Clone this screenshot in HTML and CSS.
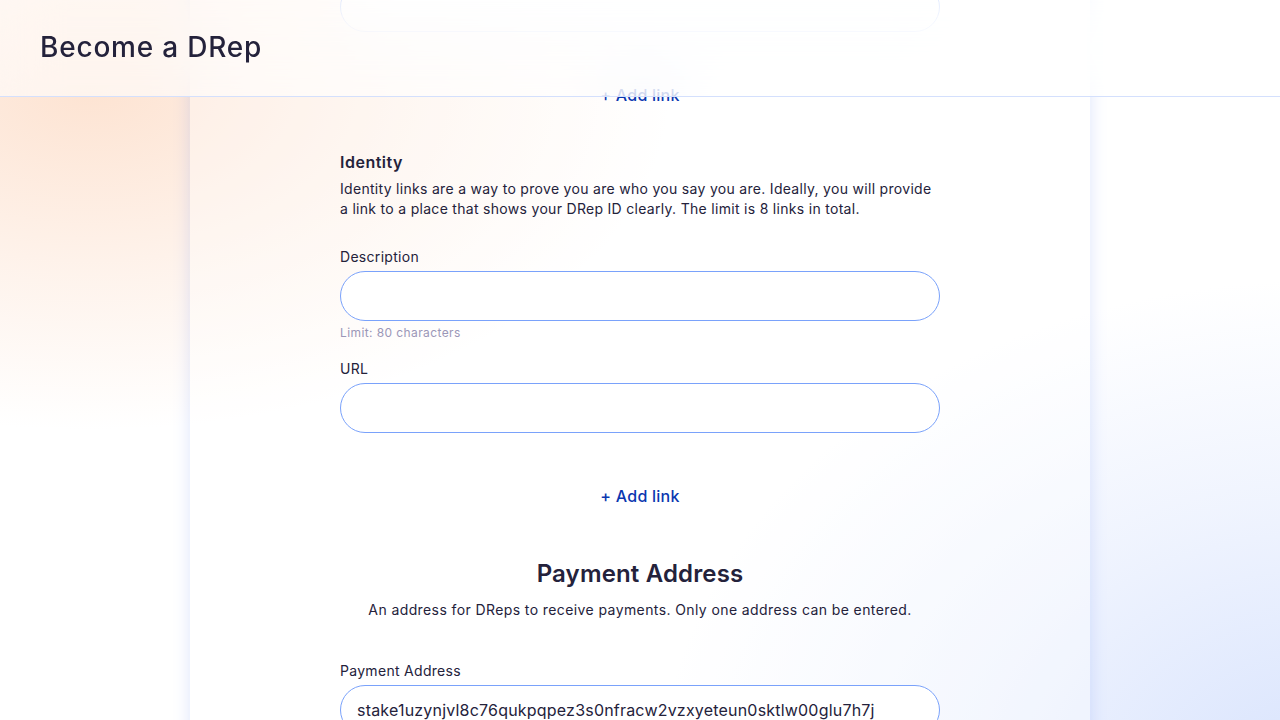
FILE: index.html
```html
<!DOCTYPE html>
<html lang="en">
<head>
<meta charset="utf-8">
<title>Become a DRep</title>
<link rel="stylesheet" href="styles.css">
</head>
<body>
<header class="topbar">
  <h1 class="topbar-title">Become a DRep</h1>
</header>
<main class="page">
  <section class="card">
    <div class="column">
      <div class="field">
        <label class="field-label">URL</label>
        <div class="input"></div>
      </div>
      <div class="add-row"><button class="add-link">+ Add link</button></div>

      <h2 class="section-title">Identity</h2>
      <p class="section-text">Identity links are a way to prove you are who you say you are. Ideally, you will provide a link to a place that shows your DRep ID clearly. The limit is 8 links in total.</p>

      <div class="field field-first">
        <label class="field-label">Description</label>
        <div class="input"></div>
        <div class="field-hint">Limit: 80 characters</div>
      </div>
      <div class="field field-next">
        <label class="field-label">URL</label>
        <div class="input"></div>
      </div>
      <div class="add-row"><button class="add-link">+ Add link</button></div>

      <h2 class="block-title">Payment Address</h2>
      <p class="block-text">An address for DReps to receive payments. Only one address can be entered.</p>

      <div class="field field-pay">
        <label class="field-label">Payment Address</label>
        <div class="input input-filled">stake1uzynjvl8c76qukpqpez3s0nfracw2vzxyeteun0sktlw00glu7h7j</div>
      </div>
    </div>
  </section>
</main>
</body>
</html>
```
FILE: styles.css
```css
* { box-sizing: border-box; }
html, body { margin: 0; padding: 0; }
body {
  font-family: "Inter", "Noto Sans", sans-serif;
  color: #24223b;
  min-height: 100vh;
  overflow: hidden;
  background:
    radial-gradient(ellipse 580px 340px at 90px 90px, rgba(253, 226, 208, 0.95), rgba(253, 226, 208, 0.4) 55%, rgba(253, 226, 208, 0) 100%),
    radial-gradient(ellipse 660px 500px at 1320px 780px, rgba(216, 227, 253, 1), rgba(216, 227, 253, 0.4) 55%, rgba(216, 227, 253, 0) 100%),
    #ffffff;
}
.topbar {
  position: fixed;
  top: 0; left: 0; right: 0;
  height: 97px;
  z-index: 10;
  display: flex;
  align-items: center;
  padding: 0 40px 2px;
  background: rgba(255, 255, 255, 0.6);
  backdrop-filter: blur(28px);
  border-bottom: 1px solid #d4e0fd;
}
.topbar-title {
  margin: 0;
  font-size: 28px;
  font-weight: 500;
  letter-spacing: 0.8px;
  color: #24223b;
}
.page {
  display: flex;
  justify-content: center;
  margin-top: -100px;
}
.card {
  width: 900px;
  min-height: 900px;
  background: rgba(255, 255, 255, 0.35);
  box-shadow: 0 0 16px rgba(90, 125, 240, 0.2);
  padding-top: 58px;
}
.column {
  width: 600px;
  margin: 0 auto;
}
.field-label {
  display: block;
  font-size: 14px;
  line-height: 20px;
  letter-spacing: 0.3px;
  margin-bottom: 4px;
  color: #24223b;
}
.input {
  height: 50px;
  border: 1px solid #7aa2fb;
  border-radius: 25px;
  background: #ffffff;
  display: flex;
  align-items: center;
  padding: 0 16px;
  font-size: 16px;
  letter-spacing: 0.2px;
  color: #24223b;
}
.field-hint {
  margin-top: 4px;
  font-size: 12px;
  line-height: 16px;
  letter-spacing: 0.4px;
  color: #9b97b8;
}
.add-row {
  display: flex;
  justify-content: center;
  margin-top: 43px;
}
.add-link {
  height: 40px;
  border: none;
  background: transparent;
  font-family: inherit;
  font-size: 16px;
  font-weight: 500;
  letter-spacing: 0.25px;
  color: #0a37b0;
  padding: 0 6px;
}
.section-title {
  margin: 35px 0 0;
  font-size: 16px;
  line-height: 24px;
  font-weight: 600;
  letter-spacing: 0.5px;
  color: #24223b;
}
.section-text {
  margin: 5px 0 0;
  font-size: 14px;
  line-height: 20px;
  letter-spacing: 0.3px;
}
.field-first { margin-top: 28px; }
.field-next { margin-top: 18px; }
.block-title {
  margin: 42px 0 0;
  text-align: center;
  font-size: 24px;
  line-height: 32px;
  font-weight: 600;
  letter-spacing: 0.15px;
  color: #24223b;
}
.block-text {
  margin: 10px 0 0;
  text-align: center;
  font-size: 14px;
  line-height: 20px;
  letter-spacing: 0.4px;
}
.field-pay { margin-top: 41px; }
```
